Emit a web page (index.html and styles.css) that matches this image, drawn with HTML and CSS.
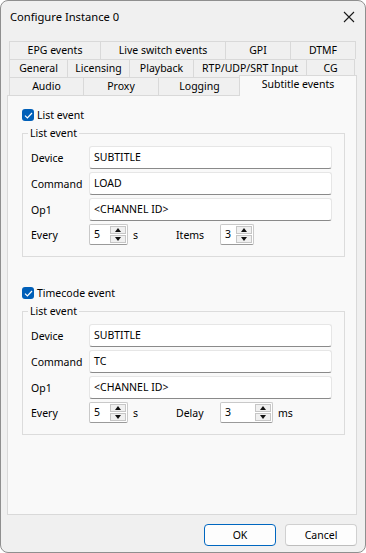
FILE: index.html
```html
<!DOCTYPE html>
<html>
<head>
<meta charset="utf-8">
<link rel="stylesheet" href="styles.css">
</head>
<body>
<div class="window">
  <div class="titlebar">
    <span class="title">Configure Instance 0</span>
    <svg class="close" width="12" height="12" viewBox="0 0 12 12"><path d="M1 1 L11 11 M11 1 L1 11" stroke="#1a1a1a" stroke-width="1.1" fill="none"/></svg>
  </div>
  <div class="tabs">
    <div class="tabrow">
      <div class="tab w92">EPG events</div>
      <div class="tab w126">Live switch events</div>
      <div class="tab w66">GPI</div>
      <div class="tab w66">DTMF</div>
    </div>
    <div class="tabrow">
      <div class="tab w59">General</div>
      <div class="tab w63">Licensing</div>
      <div class="tab w65">Playback</div>
      <div class="tab w114">RTP/UDP/SRT Input</div>
      <div class="tab w49">CG</div>
    </div>
    <div class="tabrow">
      <div class="tab w75">Audio</div>
      <div class="tab w76">Proxy</div>
      <div class="tab w83">Logging</div>
      <div class="tab sel">Subtitle events</div>
    </div>
  </div>
  <div class="panel">
    <div class="check"><span class="box"><svg width="9" height="7" viewBox="0 0 9 7"><path d="M1 3.6 L3.4 6 L8 1" stroke="#fff" stroke-width="1.2" fill="none"/></svg></span><span>List event</span></div>
    <fieldset class="group">
      <legend>List event</legend>
      <div class="row"><span class="lbl">Device</span><div class="field">SUBTITLE</div></div>
      <div class="row"><span class="lbl">Command</span><div class="field">LOAD</div></div>
      <div class="row"><span class="lbl">Op1</span><div class="field">&lt;CHANNEL ID&gt;</div></div>
      <div class="row spinrow">
        <span class="lbl">Every</span>
        <div class="spin s39"><span class="val">5</span><span class="btns"><span class="sb"><i class="up"></i></span><span class="sb"><i class="dn"></i></span></span></div>
        <span class="unit">s</span>
        <span class="lbl2">Items</span>
        <div class="spin s34"><span class="val">3</span><span class="btns"><span class="sb"><i class="up"></i></span><span class="sb"><i class="dn"></i></span></span></div>
      </div>
    </fieldset>

    <div class="check second"><span class="box"><svg width="9" height="7" viewBox="0 0 9 7"><path d="M1 3.6 L3.4 6 L8 1" stroke="#fff" stroke-width="1.2" fill="none"/></svg></span><span>Timecode event</span></div>
    <fieldset class="group">
      <legend>List event</legend>
      <div class="row"><span class="lbl">Device</span><div class="field">SUBTITLE</div></div>
      <div class="row"><span class="lbl">Command</span><div class="field">TC</div></div>
      <div class="row"><span class="lbl">Op1</span><div class="field">&lt;CHANNEL ID&gt;</div></div>
      <div class="row spinrow">
        <span class="lbl">Every</span>
        <div class="spin s39"><span class="val">5</span><span class="btns"><span class="sb"><i class="up"></i></span><span class="sb"><i class="dn"></i></span></span></div>
        <span class="unit">s</span>
        <span class="lbl2">Delay</span>
        <div class="spin s53"><span class="val">3</span><span class="btns"><span class="sb"><i class="up"></i></span><span class="sb"><i class="dn"></i></span></span></div>
        <span class="unit">ms</span>
      </div>
    </fieldset>
  </div>
  <div class="footer">
    <button class="btn default">OK</button>
    <button class="btn">Cancel</button>
  </div>
</div>
</body>
</html>
```

FILE: styles.css
```css
* { box-sizing: border-box; }
html, body { margin: 0; padding: 0; background: #ffffff; }
body {
  font-family: "Noto Sans", "Liberation Sans", sans-serif;
  font-size: 10.5px;
  color: #000;
}
.window {
  width: 366px;
  height: 553px;
  border: 1px solid #8f8f8f;
  border-radius: 8px;
  background: #f0f0f0;
  display: flex;
  flex-direction: column;
  overflow: hidden;
}
.titlebar {
  height: 32px;
  flex: none;
  display: flex;
  align-items: center;
  justify-content: space-between;
  padding: 0 9px 0 9px;
}
.title { font-size: 11.2px; line-height: 16px; }
.close { margin-right: 1px; }

.tabs {
  margin: 8px 0 0 8px;
  display: flex;
  flex-direction: column;
}
.tabrow {
  height: 18px;
  display: flex;
  align-items: flex-end;
}
.tab {
  height: 18px;
  border: 1px solid #d9d9d9;
  border-bottom: none;
  margin-left: -1px;
  background: #f0f0f0;
  text-align: center;
  line-height: 17px;
  white-space: nowrap;
}
.tabrow .tab:first-child { margin-left: 0; }
.w49 { width: 49px; } .w59 { width: 59px; } .w63 { width: 63px; } .w65 { width: 65px; }
.w66 { width: 66px; } .w75 { width: 75px; } .w76 { width: 76px; } .w83 { width: 83px; }
.w92 { width: 92px; } .w114 { width: 114px; } .w126 { width: 126px; }
.tab.sel {
  position: relative;
  z-index: 1;
  width: 118px;
  height: 21px;
  margin-left: -2px;
  margin-bottom: -1px;
  background: #f9f9f9;
  line-height: 17px;
}

.panel {
  margin-left: 6px;
  width: 350px;
  height: 420px;
  flex: none;
  background: #f9f9f9;
  border: 1px solid #d9d9d9;
  padding: 11px 11px 0 14px;
}
.check {
  display: flex;
  align-items: center;
  height: 16px;
  line-height: 16px;
}
.check.second { margin-top: 28px; }
.box {
  width: 12px;
  height: 12px;
  border-radius: 3px;
  background: #005fb8;
  display: flex;
  align-items: center;
  justify-content: center;
  margin-right: 3px;
}
.group {
  margin: 2px 0 0 0;
  padding: 5px 12px 11px 8px;
  border: 1px solid #dcdcdc;
  min-inline-size: 0;
}
.group legend {
  padding: 0 2px;
  margin-left: -3px;
  line-height: 16px;
}
.row {
  display: flex;
  align-items: center;
  height: 23px;
  margin-bottom: 3px;
}
.row:last-child { margin-bottom: 0; height: 21px; }
.lbl { width: 58px; flex: none; }
.field {
  flex: 1;
  height: 23px;
  background: #fff;
  border: 1px solid #e6e6e6;
  border-bottom-color: #8a8a8a;
  border-radius: 3px;
  padding-left: 4px;
  line-height: 20px;
  white-space: nowrap;
}
.spin {
  height: 21px;
  display: flex;
  background: #fff;
  border: 1px solid #c9c9c9;
  border-bottom-color: #9a9a9a;
  border-radius: 2px;
  flex: none;
}
.s39 { width: 39px; }
.s34 { width: 34px; }
.s53 { width: 53px; }
.val { flex: 1; padding-left: 4px; line-height: 18px; }
.btns {
  width: 17px;
  display: flex;
  flex-direction: column;
  gap: 1px;
  padding: 1px 1px 1px 0;
}
.sb {
  flex: 1;
  background: #f0f0f0;
  border: 1px solid #c6c6c6;
  display: flex;
  align-items: center;
  justify-content: center;
}
.up, .dn { width: 0; height: 0; border-left: 3px solid transparent; border-right: 3px solid transparent; }
.up { border-bottom: 4px solid #111; }
.dn { border-top: 4px solid #111; }
.unit { margin-left: 5px; }
.lbl2 { width: 44px; flex: none; }
.spinrow .unit + .lbl2 { margin-left: 38px; }

.footer {
  flex: 1;
  display: flex;
  justify-content: flex-end;
  align-items: flex-start;
  gap: 9px;
  padding: 9px 8px 0 0;
}
.btn {
  width: 72px;
  height: 22px;
  font: inherit;
  color: #000;
  background: #fdfdfd;
  border: 1px solid #d0d0d0;
  border-bottom-color: #bdbdbd;
  border-radius: 4px;
  padding: 0;
}
.btn.default {
  border: 1px solid #0067c0;
}
```
